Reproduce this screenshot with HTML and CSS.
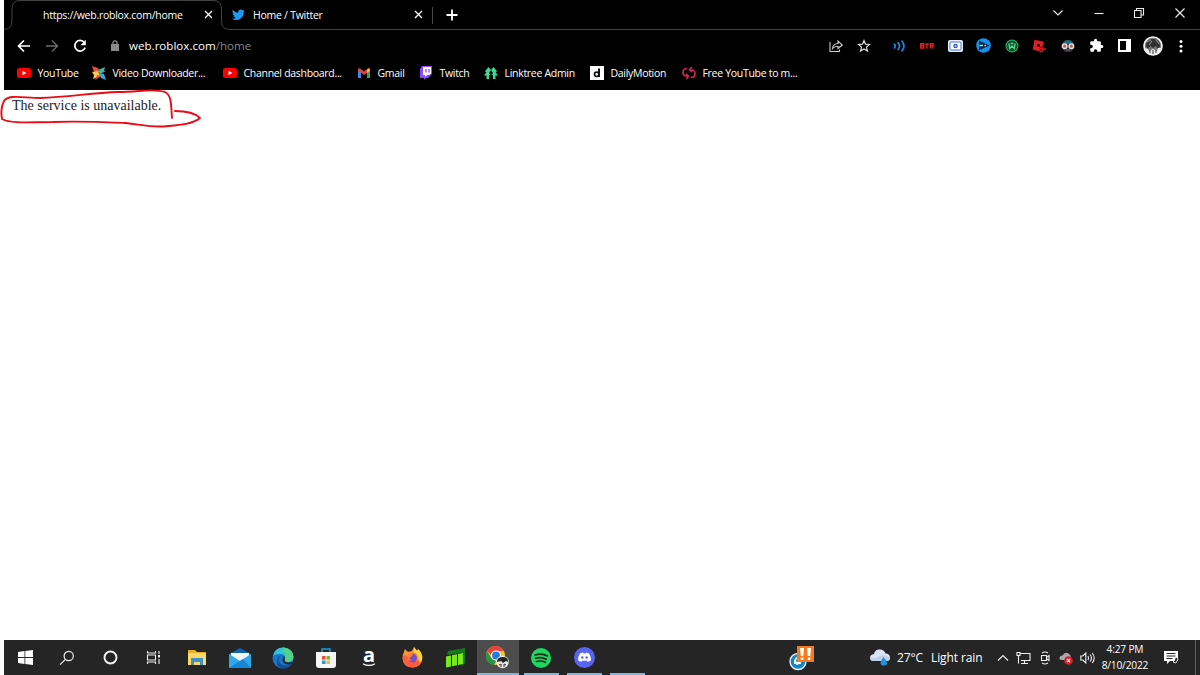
FILE: index.html
```html
<!DOCTYPE html>
<html lang="en">
<head>
    <meta charset="utf-8">
    <title>https://web.roblox.com/home</title>
    <link rel="stylesheet" href="styles.css">
</head>
<body>
    <div class="browser">
        <div class="tabs">
            <svg class="tab-line" width="1196" height="31" fill="none" stroke="#414141"><path d="M0 29.5Q8 29 8 21V9Q8 .5 16 .5H209Q217.5 .5 217.5 9V21Q217.5 29.5 226 29.5H1196"/></svg>
            <div class="tab first">
                <span>https://web.roblox.com/home</span>
                <svg class="x" width="9" height="9" viewBox="0 0 9 9"><path d="M1 1l7 7M8 1L1 8"/></svg>
            </div>
            <div class="tab second">
                <svg class="bird" width="13" height="13" viewBox="0 0 24 24" fill="#1d9bf0"><path d="M23.6 4.9a9.7 9.7 0 0 1-2.8.8 4.9 4.9 0 0 0 2.1-2.7 9.7 9.7 0 0 1-3.1 1.2 4.9 4.9 0 0 0-8.3 4.5A13.8 13.8 0 0 1 1.7 3.6a4.9 4.9 0 0 0 1.5 6.5 4.9 4.9 0 0 1-2.2-.6v.1a4.9 4.9 0 0 0 3.9 4.8 4.9 4.9 0 0 1-2.2.1 4.9 4.9 0 0 0 4.6 3.4A9.8 9.8 0 0 1 0 19.9a13.8 13.8 0 0 0 7.5 2.2c9.1 0 14-7.5 14-14v-.6a10 10 0 0 0 2.1-2.6z"/></svg>
                <span>Home / Twitter</span>
                <svg class="x" width="9" height="9" viewBox="0 0 9 9"><path d="M1 1l7 7M8 1L1 8"/></svg>
            </div>
            <svg class="plus" width="12" height="12" viewBox="0 0 12 12" stroke="#fff" stroke-width="1.8"><path d="M6 .5v11M.5 6h11"/></svg>
            <div class="controls">
                <svg width="12" height="12" viewBox="0 0 12 12"><path d="M1.500 3.500L6 8l4.500-4.500"/></svg>
                <svg width="12" height="12" viewBox="0 0 12 12"><path d="M1.500 6.500h9"/></svg>
                <svg width="12" height="12" viewBox="0 0 12 12"><path d="M1.500 3.500h6.500v7H1.500zM3.500 3.500v-2h7v6.500H8"/></svg>
                <svg width="12" height="12" viewBox="0 0 12 12"><path d="M1.500 1.500l9 9M10.500 1.500l-9 9"/></svg>
            </div>
        </div>

        <div class="toolbar">
            <div class="icons nav">
                <svg width="14" height="14" viewBox="0 0 14 14" fill="none" stroke="#fff" stroke-width="1.700"><path d="M13 7H2M7 1.500L1.500 7 7 12.500"/></svg>
                <svg width="14" height="14" viewBox="0 0 14 14" fill="none" stroke="#6d6d6d" stroke-width="1.400"><path d="M1 7h11M7 1.500L12.500 7 7 12.500"/></svg>
                <svg width="14" height="14" viewBox="0 0 14 14" fill="none" stroke="#fff" stroke-width="1.800"><path d="M11.300 3.500A5.300 5.300 0 1 0 12.100 8.600"/><path d="M12.800.8v5.400H7.500z" fill="#fff" stroke="none"/></svg>
            </div>
            <svg class="lock" width="8" height="11" viewBox="0 0 8 11"><path d="M0 4h8v7H0z" fill="#8b8b8b"/><path d="M2 4V2.800a2 2 0 0 1 4 0V4" fill="none" stroke="#8b8b8b" stroke-width="1.300"/></svg>
            <div class="url">web.roblox.com<span>/home</span></div>
            <div class="icons share">
                <svg width="14" height="14" viewBox="0 0 14 14" fill="none" stroke="#ccc" stroke-width="1.100"><path d="M1 3v9.500h9.500v-2M3.500 9.500C3.800 6 6 4.600 9 4.500V2l4.300 4L9 9.500V7.200C6.500 7.100 5 7.700 3.500 9.500z"/></svg>
                <svg width="14" height="14" viewBox="0 0 14 14" fill="none" stroke="#ddd" stroke-width="1.200"><path d="M7 1.500l1.500 3.700 4 .3-3 2.600.9 3.900L7 9.900 3.600 12l.9-3.900-3-2.600 4-.3z"/></svg>
            </div>
            <div class="icons ext">
                <svg width="14" height="14" viewBox="0 0 14 14" fill="none" stroke="#1687e8" stroke-width="1.700"><path d="M2 4.500q2.500 2.500 0 5M5.500 3q4 4 0 8M9.500 1.500q5 5.500 0 11"/></svg>
                <svg width="14" height="6" viewBox="0 0 14 6" fill="none" stroke="#e2231a" stroke-width="1.400"><path d="M.7.700h3v4.300h-3zM.7 2.800h3M5.300 1h3.500M7 1v4.500M10.300 5.500V.8h2.800v2.100h-2.800M12 3l1.300 2.500"/></svg>
                <svg width="15" height="12" viewBox="0 0 15 12"><rect width="15" height="12" rx="2" fill="#e6edff"/><rect x="2" y="2" width="11" height="8" rx="1" fill="#fff" stroke="#4b74d6"/><circle cx="7.500" cy="6" r="2.300" fill="#315cc4"/><path d="M6.500 6h2" stroke="#fff"/></svg>
                <svg width="15" height="15" viewBox="0 0 15 15"><circle cx="7.500" cy="7.500" r="7.300" fill="#1492ed"/><path d="M3 2.800l10.500 4.700L3 12.200z" fill="#082640"/><path d="M3.500 7.500h3.500M8.500 7.500h1.500" stroke="#b9ddf8" stroke-width="1.700"/></svg>
                <svg width="14" height="14" viewBox="0 0 14 14" fill="none"><circle cx="7" cy="7" r="6.500" fill="#22b866"/><circle cx="7" cy="7" r="5" fill="#0b4727" stroke="#063d20" stroke-width=".7"/><path d="M3.800 4.500l1 5L7 7l2.200 2.500 1-5M5.500 4.500h3" stroke="#4ee08d" stroke-width="1.300"/></svg>
                <svg width="15" height="14" viewBox="0 0 15 14"><path d="M2.500.7l9.500 2.100-1.300 5.200-1 5-9-2.400z" fill="#e11d20"/><path d="M5.500 4.800l2.500.5-.5 2.500-2.500-.5z" fill="#000"/><path d="M7.500 9l3-1.500h4.500V14H8z" fill="#000"/><path d="M7 10.500l3-1.500 1.500 1.500 2.500-.8M8 12.800l3-1.300" stroke="#e11d20" stroke-width="1.500" fill="none"/></svg>
                <svg width="14" height="14" viewBox="0 0 14 14"><path d="M1.500 5.500Q2 1 7 1t5.500 4.500z" fill="#24687b"/><path d="M2 6h10v5l-2 2H4l-2-2z" fill="#26333e"/><g fill="#a76565" stroke="#eee0dd" stroke-width="1.400"><circle cx="3.600" cy="7.200" r="2.300"/><circle cx="10.400" cy="7.200" r="2.300"/></g><path d="M5 11h4" stroke="#8b6767"/></svg>
                <svg width="15" height="15" viewBox="0 0 24 24" fill="#fff"><path d="M20.500 11H19V7a2 2 0 0 0-2-2h-4V3.500a2.500 2.500 0 0 0-5 0V5H4a2 2 0 0 0-2 2v3.800h1.500a2.700 2.700 0 0 1 0 5.400H2V20a2 2 0 0 0 2 2h3.800v-1.500a2.700 2.700 0 0 1 5.400 0V22H17a2 2 0 0 0 2-2v-4h1.500a2.500 2.500 0 0 0 0-5z"/></svg>
                <svg width="13" height="13" viewBox="0 0 13 13"><path d="M0 0h13v13H0z" fill="#fff"/><path d="M2 2h6v9H2z" fill="#000"/></svg>
                <svg width="20" height="20" viewBox="0 0 20 20"><circle cx="10" cy="10" r="9" fill="#777" stroke="#f4f4f4" stroke-width="1.700"/><path d="M3 10q0-7 7-7t7 7l-2 3-2-3-3 2-3-2-2 3z" fill="#303030"/><path d="M4 6l4-2M13 4l3 4M6 9l3-4" stroke="#bbb" stroke-width=".8"/><path d="M2 12l3 1 1 2 4-2 4 2 1-3 3 0q-1 6-8 6.500Q4 18 2 12z" fill="#eee"/><path d="M7 14v3M10 14v4M13 14v3" stroke="#333"/></svg>
                <svg width="4" height="14" viewBox="0 0 4 14" fill="#fff"><circle cx="2" cy="2.500" r="1.500"/><circle cx="2" cy="7.300" r="1.500"/><circle cx="2" cy="12" r="1.500"/></svg>
            </div>
        </div>

        <div class="bookmarks">
            <div><svg viewBox="0 0 14 14"><rect y="2" width="14" height="10" rx="2.500" fill="#f00"/><path d="M5.500 4.800L9.300 7 5.500 9.200z" fill="#fff"/></svg><span>YouTube</span></div>
            <div><svg viewBox="0 0 14 14"><path d="M0 0l6 2 2 5-6-1z" fill="#f04c35"/><path d="M6 4l7-3-1 4h2L8 8z" fill="#3cb7a2"/><path d="M7 7l5 1 2 6-5-2z" fill="#38a9dd"/><path d="M6 5l2 5-7 3 1-4-2-3z" fill="#f6c84c"/><path d="M5 9l4 1-6 4z" fill="#e9503e"/></svg><span>Video Downloader...</span></div>
            <div><svg viewBox="0 0 14 14"><rect y="2" width="14" height="10" rx="2.500" fill="#f00"/><path d="M5.500 4.800L9.300 7 5.500 9.200z" fill="#fff"/></svg><span>Channel dashboard...</span></div>
            <div><svg viewBox="0 0 14 14"><path d="M1 3l3 2v7H1z" fill="#4285f4"/><path d="M10 5l3-2v9h-3z" fill="#34a853"/><path d="M1 4V3q1-1.500 2.500-.3L7 5.500l3.500-2.800Q12 1.500 13 3v1.500L7 9 1 4.500z" fill="#ea4335"/><path d="M10 4l1-1.500q1.500-.5 2 1V5l-3 2z" fill="#fbbc04"/></svg><span>Gmail</span></div>
            <div><svg viewBox="0 0 14 14"><path d="M3 0h10v8l-4 4H7l-2 2v-2H1V3z" fill="#9146ff"/><path d="M4 1h8v6.500L10 9H8L6 11V9H4z" fill="#fff"/><path d="M7 3v3.500M10 3v3.500" stroke="#9146ff" stroke-width="1.300"/></svg><span>Twitch</span></div>
            <div><svg viewBox="0 0 14 14" fill="#39d99a"><path d="M4.500 1L7 4 5 7l1.500 2H5v4H2.500V9.500H0L2.500 6 .8 5.500z"/><path d="M9.500 1L7 4l2 3-1.500 2H9v4h2.500V9.500H14L11.500 6l1.700-.5z"/></svg><span>Linktree Admin</span></div>
            <div><svg viewBox="0 0 14 14"><path d="M0 0h14v14H0z" fill="#fff"/><path d="M9 2.500v8.500" stroke="#111" stroke-width="2"/><circle cx="6.700" cy="8.300" r="2.200" fill="none" stroke="#111" stroke-width="1.700"/></svg><span>DailyMotion</span></div>
            <div><svg viewBox="0 0 14 14" fill="none" stroke="#c82755" stroke-width="1.700"><path d="M5 2.500Q1 2.500 1 6.500T6 10.200M9 11.500Q13 11.500 13 7.500T8 3.800M4 8l2.500 2.200L4.500 13M10 1L7.500 3.800 10 6"/></svg><span>Free YouTube to m...</span></div>
        </div>

        <div class="page">The service is unavailable.</div>
        <svg class="scribble" width="210" height="45" viewBox="0 0 210 45" fill="none" stroke="#e80c14" stroke-width="1.900" stroke-linecap="round" stroke-linejoin="round"><path d="M172 33C171 22 172 10 165 7C153 3 140 7 118 7C91 8 69 12 40 13C24 13 8 9 4 16Q0 23 2 34C12 39 30 37 53 37C79 36 101 37 126 38C143 40 154 43 168 41C180 40 193 39 200 33Q193 26 175 26"/></svg>
    </div>

    <div class="taskbar">
        <div class="apps">
            <div><svg width="15" height="15" viewBox="0 0 15 15" fill="#fff"><path d="M0 2l6.500-.9v6H0zM7.300 1L15 0v7.100H7.300zM0 7.900h6.500v6L0 13zM7.300 7.900H15V15l-7.700-1z"/></svg></div>
            <div><svg width="16" height="16" viewBox="0 0 16 16" fill="none" stroke="#eee" stroke-width="1.200"><circle cx="9.700" cy="6" r="4.600"/><path d="M6.400 9.300L1 14.700"/></svg></div>
            <div><svg width="15" height="15" viewBox="0 0 15 15" fill="none" stroke="#f2f2f2" stroke-width="1.900"><circle cx="7.500" cy="7.500" r="6"/></svg></div>
            <div><svg width="15" height="15" viewBox="0 0 15 15" fill="none" stroke="#eee" stroke-width="1.100"><path d="M1.500 1v2h8V1M1.500 5h8v5h-8zM1.500 14v-2h8v2M13 1v3M13 9v5"/><path d="M12 5h2v2.500h-2z" fill="#eee" stroke="none"/></svg></div>
            <div><svg width="20" height="20" viewBox="0 0 20 20"><path d="M1 2h7l2 2h9v13H1z" fill="#e9ad27"/><path d="M1 5h18v12H1z" fill="#ffd766"/><path d="M4 10h12v7h-3v-3H7v3H4z" fill="#3f91ca"/></svg></div>
            <div><svg width="22" height="20" viewBox="0 0 22 20"><path d="M0 6l11-6 11 6v14H0z" fill="#1264b0"/><path d="M2 5h18v9H2z" fill="#f2f6f9"/><path d="M0 6l11 7L22 6v14H0z" fill="#31a8e8"/><path d="M0 20L14 11l8 9z" fill="#1687d6"/></svg></div>
            <div><svg width="22" height="22" viewBox="0 0 22 22"><circle cx="11" cy="11" r="10.500" fill="#1677c8"/><path d="M1 9Q3 0 12 .5 21 2 21.500 10q-.5 5-6.500 5-3-.5-2-3 1-5-5-5-5 0-7 2z" fill="#31c2d8"/><path d="M12 .5q9 1 9.500 9.500-.5 5-6.500 5-3-.5-2-3 3-5-3-8z" fill="#53d18a"/><path d="M9 8q-5 5 0 9 5 3 11 0-4 5-10 4.500-6-2-5-8Q6 9 9 8z" fill="#124d9b"/><path d="M13 11q-2 5 5 4.500l2.500-.5-.7 2Q13 19 10.500 14q-.5-3 1.500-5z" fill="#252525"/></svg></div>
            <div><svg width="20" height="20" viewBox="0 0 20 20"><path d="M6 6V1h8v5" fill="none" stroke="#1d9ade" stroke-width="1.500"/><path d="M0 4h20v13q0 3-3 3H3q-3 0-3-3z" fill="#f5f5f5"/><path d="M6 8h3.600v3.600H6z" fill="#e9512b"/><path d="M10.500 8H14v3.600h-3.500z" fill="#79b928"/><path d="M6 12.500h3.600V16H6z" fill="#249fde"/><path d="M10.500 12.500H14V16h-3.500z" fill="#f7b72b"/></svg></div>
            <div class="amazon"><b>a</b><svg width="14" height="4" viewBox="0 0 14 4"><path d="M1 .7q6 3.500 12 0" fill="none" stroke="#fff" stroke-width="1.200"/></svg></div>
            <div><svg width="21" height="21" viewBox="0 0 21 21"><path d="M2 5l1-3 3 3 4-1 2-4 3 4 1-2q4 3 4.500 8.500Q20 20 10.500 20.500 1 20 .5 11.500q0-4 1.500-6.500z" fill="#ff9430"/><path d="M1 9q4-2 5 2 3 6 8 3l6-2q-1 8-9.500 8.500Q0 20 1 9z" fill="#ff5a3d"/><path d="M12 0l3 4 1-2q5 5 4 11l-3 3q1-8-5-11z" fill="#ffd33b"/><circle cx="10.500" cy="11" r="4.500" fill="#7950c8"/><path d="M5 7h6l-2 3-2 1 3 3-4-1z" fill="#ff8140"/></svg></div>
            <div><svg width="19" height="20" viewBox="0 0 19 20"><path d="M2 3l17-3v15l-3 3V5L1 7z" fill="#16791d"/><path d="M0 8.500l5-1v11l-5 1zM6 7.300l5-1v11l-5 1zM12 6.100l5-1v11l-5 1z" fill="#7ae820"/></svg></div>
            <div class="current"><svg class="chrome" width="23" height="24" viewBox="0 0 23 24"><circle cx="9.500" cy="10.500" r="9.500" fill="#f5c72c"/><path d="M1 6Q4 1 9.500 1T18 6H9.500q-4 0-4.300 4z" fill="#e5443a"/><path d="M1 6l5 8 4 2-2 4Q0 19 0 11q0-3 1-5z" fill="#27964b"/><circle cx="10" cy="10.500" r="5" fill="#fff"/><circle cx="10" cy="10.500" r="3.900" fill="#287ae3"/><circle cx="16.500" cy="17" r="6.200" fill="#e8e8e8"/><path d="M11 17q0-5 6-5 5 0 5 5l-2-1-3 2-2-2z" fill="#222"/><path d="M13 20l2-1v3M18 22v-3l2 1" stroke="#333" fill="none"/></svg></div>
            <div class="open"><svg width="20" height="20" viewBox="0 0 20 20"><circle cx="10" cy="10" r="10" fill="#1ed760"/><path d="M4 7q7-2 12.500 1M4.500 10.300q6-1.800 10.800 1M5.500 13.500q5-1.300 8.800.8" fill="none" stroke="#17291b" stroke-width="1.700" stroke-linecap="round"/></svg></div>
            <div class="open"><svg width="21" height="21" viewBox="0 0 21 21"><circle cx="10.500" cy="10.500" r="10.500" fill="#5865f2"/><path d="M6 6.500q2-1 3-.9l.5.8h2l.5-.8q1 0 3 .9 2 3 2 6.800-1.500 1.200-3.500 1.500l-.8-1.300q-2.200.5-4.400 0L7.500 14.800Q5.500 14.500 4 13.300 4 9.500 6 6.500z" fill="#fff"/><circle cx="8.300" cy="10.500" r="1.200" fill="#5865f2"/><circle cx="12.700" cy="10.500" r="1.200" fill="#5865f2"/></svg></div>
            <div class="open"></div>
        </div>
        <svg class="alert" width="26" height="26" viewBox="0 0 26 26"><circle cx="9" cy="16.500" r="8" fill="#1584c5" stroke="#e8f2f8" stroke-width="1.400"/><path d="M11 12q-6 1-5 6h6M6 16l2 3 3-1" fill="none" stroke="#fff" stroke-width="1.800"/><path d="M8 1h17v16H8z" fill="#f47b20"/><path d="M11 3h4l-.7 8h-2.500zM18 3h4l-.7 8h-2.500zM11.800 12.500h2.500V15h-2.500zM18.800 12.500h2.500V15h-2.500z" fill="#fff"/></svg>
        <svg class="weather" width="21" height="18" viewBox="0 0 21 18"><path d="M4 12Q0 12 0 8.500 0 5.500 4 5 5 0 10 .5q4 0 5.500 4Q20 4.500 20 9q0 3-3.500 3z" fill="#dce5f7"/><path d="M4 12Q0 12 0 8.500q5 2 9-1 6-3 11 1.500 0 3-3.500 3z" fill="#c1cfea"/><path d="M13.500 8q3.500 4 3.500 6a3.300 3.300 0 0 1-6.500 0q0-2 3-6z" fill="#1b94db"/></svg>
        <div class="temp">27°C</div>
        <div class="rain">Light rain</div>
        <div class="tray">
            <svg width="14" height="14" viewBox="0 0 14 14"><path d="M2 9.500l5-5 5 5"/></svg>
            <svg width="15" height="14" viewBox="0 0 15 14"><path d="M4 2.500h10v7H5M8.500 9.500v3M5 12.500h7M1 1.500h3v3H1zM2.500 4.500v8"/></svg>
            <svg width="12" height="14" viewBox="0 0 12 14"><path d="M2.500 4.500h5v5h-5zM8 6l2-1.500v5L8 8M3 2q3-2 6 0M3 12q3 2 6 0"/></svg>
            <svg width="15" height="14" viewBox="0 0 15 14"><path d="M3 9Q0 9 .5 6.500 1 4.500 3.500 4.500 6 0 10 3q2 1 2 4l-3 2z" fill="#aaa" stroke="none"/><circle cx="9.500" cy="9.500" r="4.300" fill="#d5222e" stroke="none"/><path d="M8 8l3 3M11 8l-3 3"/></svg>
            <svg width="15" height="14" viewBox="0 0 15 14"><path d="M.8 5h2l3-3v10l-3-3h-2zM7.800 5q1.500 2 0 4M10 3.500q3 3.500 0 7M12.200 2q4 5 0 10"/></svg>
        </div>
        <div class="clock">4:27 PM<br>8/10/2022</div>
        <svg class="note" width="15" height="15" viewBox="0 0 15 15"><path d="M0 1h14v10H6l-3 3v-3H0z" fill="#fff"/><path d="M2.500 3.500h9M2.500 6h9M2.500 8.500h6" stroke="#252525"/><path d="M9 12q2-1 2-4 2-2 3 1l-2 4z" fill="#252525" stroke="#fff" stroke-width=".8"/></svg>
    </div>
</body>
</html>
```
FILE: styles.css
```css
* {
    box-sizing: border-box;
}

body {
    margin: 0;
    width: 1200px;
    height: 675px;
    padding-left: 4px;
    display: flex;
    flex-direction: column;
    position: relative;
    overflow: hidden;
    background-color: #fff;
    color: #fff;
    font-family: "Open Sans", "Noto Sans", sans-serif;
    font-size: 10.5px;
}

svg {
    display: block;
    flex-shrink: 0;
}

.browser {
    flex: 1;
}

.tabs,
.toolbar,
.bookmarks {
    background-color: #000;
    white-space: nowrap;
}

.tabs {
    height: 30px;
    display: flex;
    align-items: center;
    position: relative;
    letter-spacing: -0.26px;
}

.tab-line {
    position: absolute;
    left: 0;
    top: 0;
}

.tab {
    display: flex;
    align-items: center;
    height: 30px;
    padding-bottom: 1px;
}

.first {
    width: 218px;
    padding-left: 39px;
    padding-right: 9px;
}

.second {
    width: 211px;
    padding-left: 10px;
    padding-right: 10px;
    position: relative;
}

.second::after {
    content: "";
    position: absolute;
    right: 0;
    top: 7px;
    width: 1px;
    height: 17px;
    background-color: #4a4a4a;
}

.bird {
    margin-right: 8px;
}

.x {
    margin-left: auto;
    stroke: #fff;
    stroke-width: 1.3;
}

.plus {
    margin-left: 13px;
}

.controls {
    width: 162px;
    margin-left: auto;
    display: grid;
    grid-template-columns: repeat(4, 1fr);
    justify-items: center;
    padding-bottom: 5px;
}

.controls svg {
    fill: none;
    stroke: #eee;
    stroke-width: 1.1;
}

.toolbar {
    height: 31px;
    display: flex;
    align-items: center;
    padding: 0 5px 0 6px;
}

.icons {
    display: grid;
    grid-auto-flow: column;
    grid-auto-columns: 28px;
    align-items: center;
    justify-items: center;
}

.lock {
    margin-left: 17px;
}

.url {
    margin-left: 10px;
    font-size: 11.6px;
}

.url span {
    color: #858585;
}

.share {
    margin-left: auto;
}

.ext {
    margin-left: 7px;
    grid-auto-columns: 28.2px;
}

.bookmarks {
    height: 29px;
    padding: 0 0 5px 13px;
    display: grid;
    grid-template-columns: 75px 131px 134px 62px 65px 106px 92px 130px;
    align-items: center;
    letter-spacing: -0.3px;
}

.bookmarks div {
    display: flex;
    align-items: center;
    gap: 6.5px;
}

.bookmarks svg {
    width: 14px;
    height: 14px;
}

.page {
    padding: 7px 8px;
    color: #222;
    font: 14px/17px "Liberation Serif", serif;
}

.scribble {
    position: absolute;
    left: 0;
    top: 85px;
}

.taskbar {
    height: 35px;
    display: flex;
    align-items: center;
    background-color: #252525;
    position: relative;
}

.taskbar::after {
    content: "";
    position: absolute;
    right: 4px;
    top: 0;
    width: 1px;
    height: 35px;
    background-color: #606060;
}

.apps {
    display: grid;
    grid-template-columns: repeat(15, 43px);
}

.apps div {
    height: 35px;
    display: flex;
    align-items: center;
    justify-content: center;
    padding-right: 1px;
    position: relative;
}

.apps div:nth-child(-n+4) {
    padding-right: 3px;
}

.apps div:first-child {
    padding-right: 1px;
}

.current {
    width: 42px;
    background-color: #4d4d4d;
    border-bottom: 2px solid #76b9ed;
}

.open::after {
    content: "";
    position: absolute;
    left: 4px;
    bottom: 0;
    width: 35px;
    height: 2px;
    background-color: #76b9ed;
}

.apps .amazon {
    flex-direction: column;
    padding-bottom: 2px;
}

.amazon b {
    font-size: 20px;
    line-height: 17px;
}

.alert {
    margin-left: 140px;
}

.weather {
    margin-left: 55px;
}

.temp,
.rain {
    font-size: 12px;
    letter-spacing: -0.1px;
    white-space: nowrap;
    width: 34px;
    margin-left: 6px;
}

.rain {
    width: 51px;
    margin-left: 0;
}

.tray {
    margin-left: 10px;
    display: grid;
    grid-template-columns: repeat(5, 21.2px);
    justify-items: center;
    align-items: center;
}

.tray svg {
    fill: none;
    stroke: #eee;
    stroke-width: 1.1;
}

.clock {
    width: 52px;
    margin-left: 1px;
    padding-bottom: 1px;
    text-align: center;
    font-size: 10.2px;
    letter-spacing: -0.2px;
    line-height: 16px;
}

.note {
    margin-left: 13px;
}
```
